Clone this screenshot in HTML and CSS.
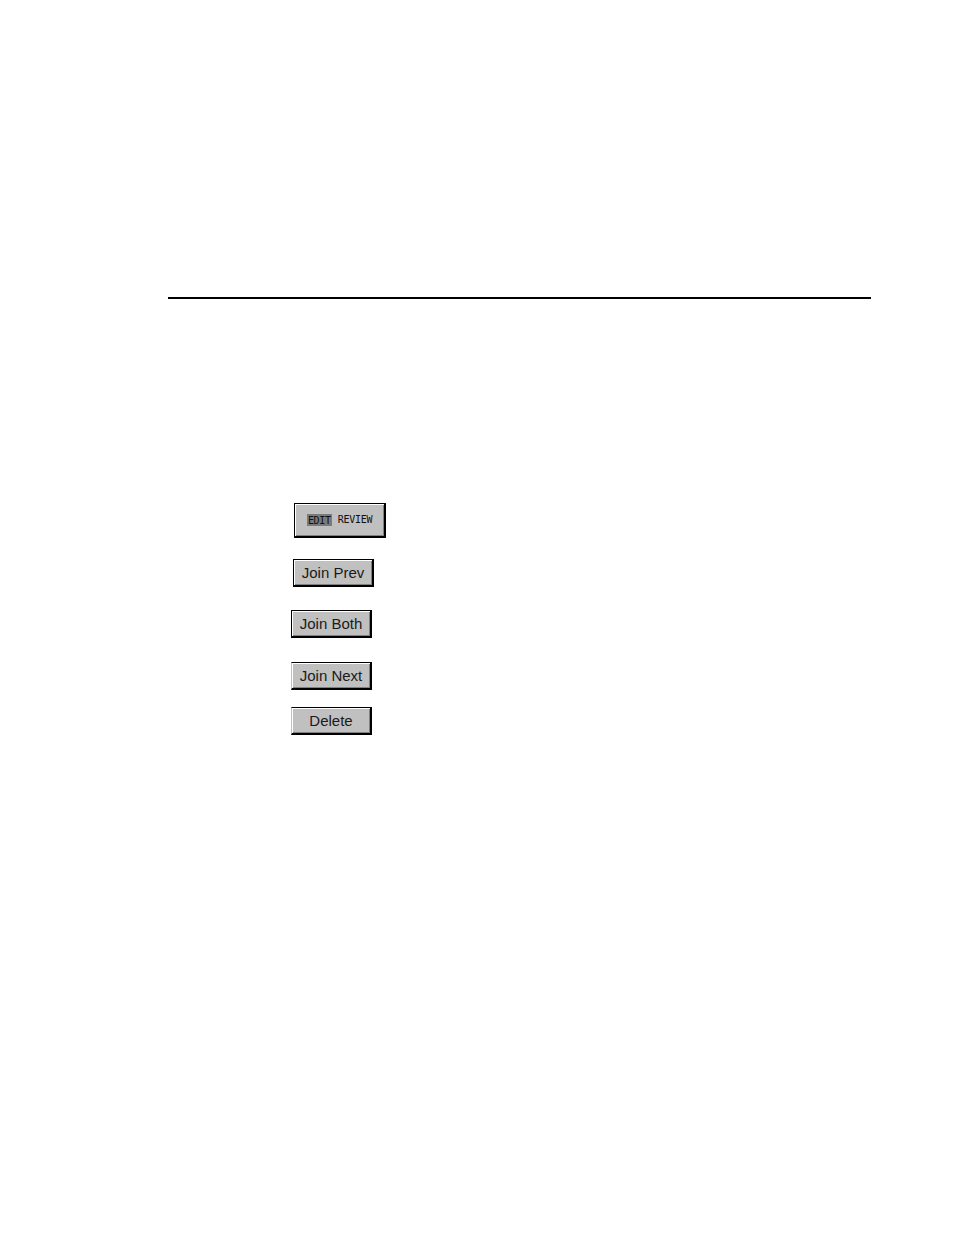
FILE: index.html
```html
<!DOCTYPE html>
<html>
<head>
<meta charset="utf-8">
<link rel="stylesheet" href="styles.css">
</head>
<body>
<div class="page">
  <hr class="rule">
  <div class="buttons">
    <div class="btn btn-mode"><span class="mode-on">EDIT</span><span class="mode-off">REVIEW</span></div>
    <div class="btn btn-prev">Join Prev</div>
    <div class="btn btn-both">Join Both</div>
    <div class="btn btn-next">Join Next</div>
    <div class="btn btn-delete">Delete</div>
  </div>
</div>
</body>
</html>
```
FILE: styles.css
```css
html, body {
  margin: 0;
  padding: 0;
  background: #ffffff;
}

.page {
  width: 954px;
  height: 1235px;
  padding-top: 297px;
  box-sizing: border-box;
}

.rule {
  margin: 0 0 0 168px;
  width: 703px;
  height: 2px;
  border: 0;
  background: #000000;
}

.buttons {
  display: flex;
  flex-direction: column;
  align-items: flex-start;
  padding-left: 291px;
}

.btn {
  box-sizing: border-box;
  display: flex;
  align-items: center;
  justify-content: center;
  background: #c0c0c0;
  border-style: solid;
  border-color: #000000;
  border-width: 1px 2px 2px 1px;
  box-shadow: inset 1px 1px 0 #ffffff, inset -1px -1px 0 #808080;
  font-family: "Liberation Sans", Arial, sans-serif;
  font-size: 15px;
  color: #1a1a1a;
  width: 81px;
  height: 28px;
  padding-bottom: 1px;
}

.btn-mode {
  width: 92px;
  height: 35px;
  margin-top: 204px;
  margin-left: 3px;
  gap: 6px;
  font-family: "DejaVu Sans Mono", monospace;
  font-size: 10px;
  letter-spacing: -0.3px;
}

.mode-on {
  background: #7a7a7a;
  color: #111111;
  padding: 1px 1px 0;
}

.mode-off {
  color: #111111;
}

.btn-prev {
  margin-top: 21px;
  margin-left: 2px;
}

.btn-both {
  margin-top: 23px;
}

.btn-next {
  margin-top: 24px;
  border-left-color: #c0c0c0;
}

.btn-delete {
  margin-top: 17px;
  border-left-color: #c0c0c0;
}
```
